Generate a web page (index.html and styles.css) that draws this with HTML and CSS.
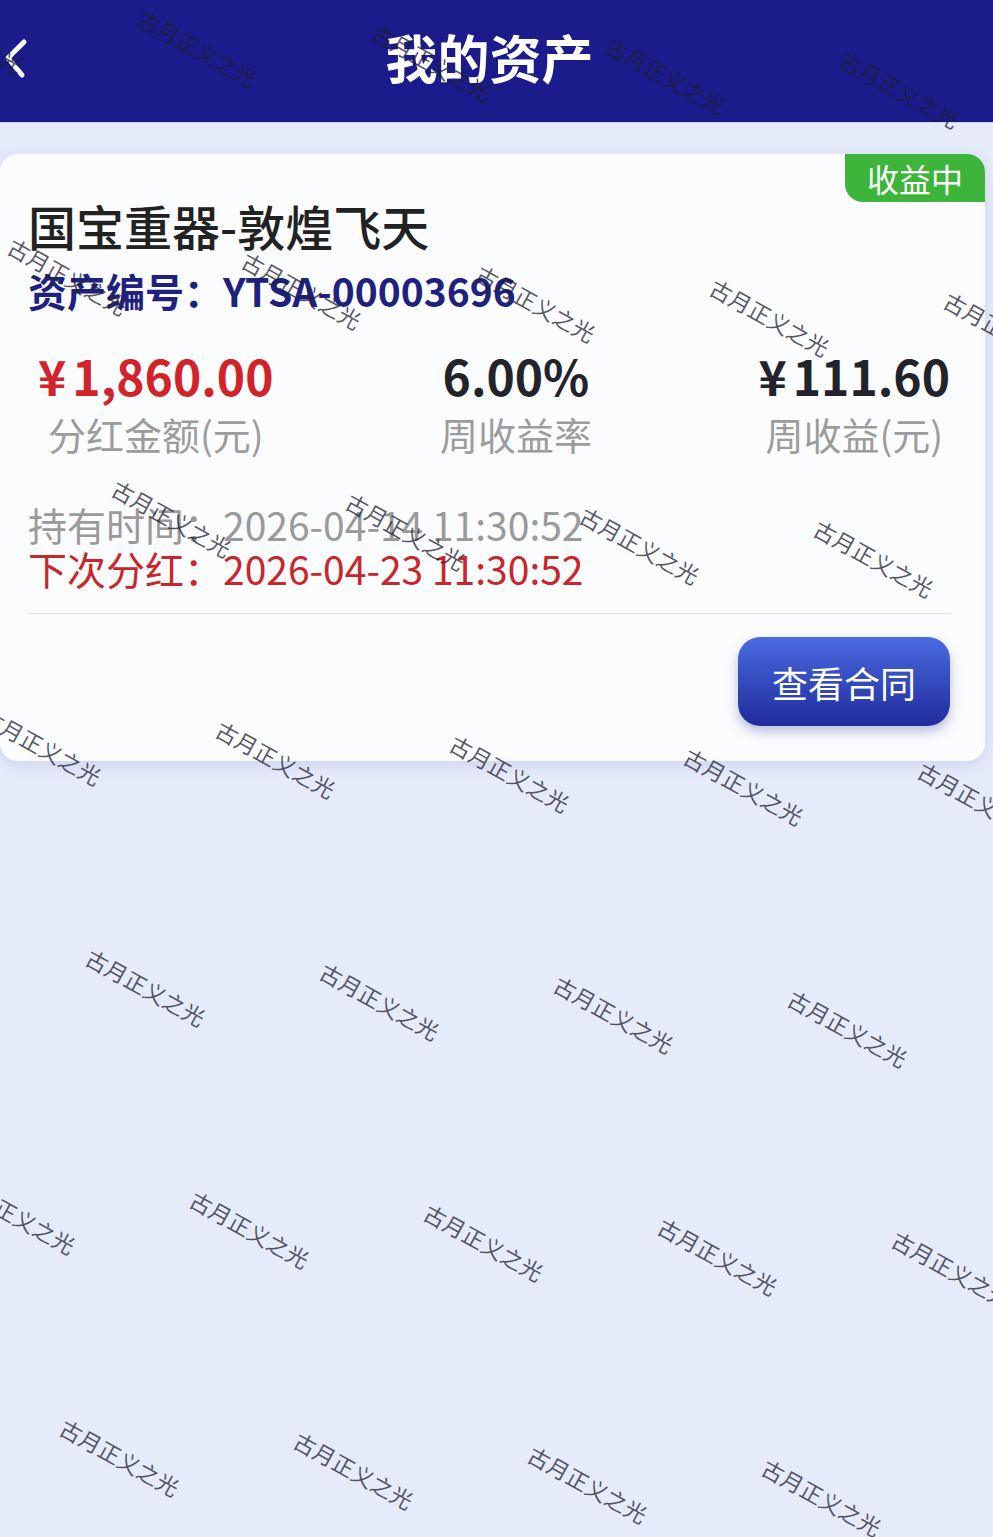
FILE: index.html
```html
<!DOCTYPE html>
<html lang="zh-CN">
<head>
  <meta charset="UTF-8">
  <meta name="viewport" content="width=device-width, initial-scale=1.0">
  <title>我的资产</title>
  <link rel="stylesheet" href="styles.css">
</head>
<body>
  <header class="topbar">
    <a class="back" href="#">
      <svg width="30" height="44" viewBox="0 0 30 44">
        <polyline points="24,7 8,23 22,40" fill="none" stroke="#fff" stroke-width="5" stroke-linecap="round" stroke-linejoin="round"/>
      </svg>
    </a>
    <h1>我的资产</h1>
    <span></span>
  </header>

  <div class="asset-card">
    <div class="badge">收益中</div>
    <h2 class="asset-name">国宝重器-敦煌飞天</h2>
    <div class="asset-no">资产编号：YTSA-00003696</div>

    <div class="stats">
      <div class="stat">
        <div class="value red"><span class="yen">¥</span>1,860.00</div>
        <div class="label">分红金额(元)</div>
      </div>
      <div class="stat">
        <div class="value">6.00%</div>
        <div class="label">周收益率</div>
      </div>
      <div class="stat">
        <div class="value"><span class="yen">¥</span>111.60</div>
        <div class="label">周收益(元)</div>
      </div>
    </div>

    <div class="times">
      <div class="hold">持有时间：2026-04-14 11:30:52</div>
      <div class="next">下次分红：2026-04-23 11:30:52</div>
    </div>

    <div class="divider"></div>

    <div class="actions">
      <button class="btn-contract">查看合同</button>
    </div>
  </div>

  <div class="watermarks" id="watermarks"></div>

  <script>
  document.addEventListener('DOMContentLoaded', () => {
    const layer = document.getElementById('watermarks');
    // lattice of the watermark text, centre of the first character
    for (let j = -1; j < 8; j++) {
      for (let i = -1; i < 9; i++) {
        const x = 150 + i * 234 - j * 130;
        const y = 21 + i * 13.5 + j * 228;
        if (x < -160 || x > 1000 || y < -90 || y > 1560) continue;
        const mark = document.createElement('span');
        mark.className = 'mark';
        mark.textContent = '古月正义之光';
        mark.style.left = (x - 11) + 'px';
        mark.style.top = (y - 11) + 'px';
        layer.appendChild(mark);
      }
    }
  });
  </script>
</body>
</html>
```

FILE: styles.css
```css
body {
  margin: 0;
  padding: 0;
  min-height: 1537px;
  background-color: #e6ebfa;
  font-family: "Noto Sans CJK SC", "Noto Sans", sans-serif;
  overflow: hidden;
}
.topbar {
  height: 123px;
  background-color: #1b1b8b;
  display: grid;
  grid-template-columns: 1fr auto 1fr;
  align-items: center;
  padding-right: 14px;
  border-bottom: 1px solid #c9cfee;
  box-sizing: border-box;
}
.topbar h1 {
  margin: 0;
  color: #fff;
  font-size: 52px;
  font-weight: 700;
  line-height: 1;
  padding-bottom: 8px;
}
.back {
  display: flex;
  padding-left: 0;
  margin-top: -8px;
}

.asset-card {
  position: relative;
  margin: 31px 8px 0 0;
  padding: 42px 35px 35px 28px;
  background-color: #fbfcfe;
  border-radius: 18px;
  box-shadow: 0 4px 14px rgba(90, 100, 180, 0.18);
}
.badge {
  position: absolute;
  top: 0;
  right: 0;
  width: 140px;
  height: 48px;
  background-color: #3db53b;
  color: #fff;
  font-size: 32px;
  line-height: 48px;
  text-align: center;
  border-radius: 0 18px 0 18px;
}
.asset-name {
  margin: 0;
  font-size: 48px;
  line-height: 58px;
  font-weight: 500;
  color: #222;
}
.asset-no {
  margin-top: 13px;
  font-size: 39px;
  line-height: 46px;
  font-weight: 700;
  color: #1e227e;
}

.stats {
  display: flex;
  justify-content: space-between;
  margin-top: 33px;
  padding-left: 10px;
}
.stat {
  text-align: center;
}
.value {
  font-size: 48px;
  line-height: 58px;
  font-weight: 700;
  color: #23232b;
}
.value.red {
  color: #d2232a;
}
.yen {
  margin-right: 6px;
}
.label {
  margin-top: 7px;
  font-size: 38px;
  line-height: 46px;
  color: #9c9c9c;
}

.times {
  margin-top: 45px;
  font-size: 39px;
  line-height: 44px;
}
.hold {
  color: #9a9a9a;
}
.next {
  color: #c8262b;
}
.divider {
  margin-top: 23px;
  height: 1px;
  background-color: #dcdde3;
}
.actions {
  display: flex;
  justify-content: flex-end;
  margin-top: 23px;
}
.btn-contract {
  width: 212px;
  height: 89px;
  border: none;
  border-radius: 22px;
  background: linear-gradient(#4a6be0, #1f2b9c);
  color: #fff;
  font-family: inherit;
  font-size: 36px;
  box-shadow: 0 6px 12px rgba(40, 50, 150, 0.3);
}

.watermarks {
  position: absolute;
  top: 0;
  left: 0;
  width: 993px;
  height: 1537px;
  overflow: hidden;
  pointer-events: none;
  z-index: 10;
}
.mark {
  position: absolute;
  font-size: 22px;
  line-height: 22px;
  white-space: nowrap;
  color: rgba(30, 30, 50, 0.75);
  transform: rotate(29deg);
  transform-origin: 11px 11px;
}
```
